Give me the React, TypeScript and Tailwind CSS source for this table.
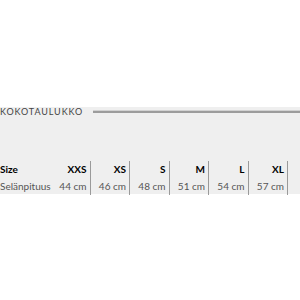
const sizes = [
  { label: 'XXS', back: '44 cm' },
  { label: 'XS', back: '46 cm' },
  { label: 'S', back: '48 cm' },
  { label: 'M', back: '51 cm' },
  { label: 'L', back: '54 cm' },
  { label: 'XL', back: '57 cm' },
];

export default function App() {
  return (
    <div className="w-[300px] h-[300px] bg-white pt-[107px] font-['Lato',sans-serif]">
      <section className="bg-[#efefef] h-[87px]">
        {/* heading with rule */}
        <div className="flex items-center h-[8px]">
          <h2 className="text-[9px] leading-none tracking-[0.9px] text-[#444] uppercase whitespace-nowrap">
            Kokotaulukko
          </h2>
          <div className="flex-1 ml-[10px] flex flex-col">
            <div className="h-px bg-[#d2d2d2]" />
            <div className="h-[2px] bg-[#9c9c9c]" />
          </div>
        </div>

        <div className="mt-[46px] grid grid-cols-[51px_repeat(6,39.5px)] text-[10px]">
          <div className="h-[17px] flex items-center font-bold text-black">Size</div>
          {sizes.map((s) => (
            <div
              key={s.label}
              className="h-[17px] flex items-center justify-end pr-[3px] border-r border-[#9a9a9a] font-bold text-black"
            >
              {s.label}
            </div>
          ))}
          <div className="h-[17px] flex items-center text-[#555]">Selänpituus</div>
          {sizes.map((s) => (
            <div
              key={s.label}
              className="h-[17px] flex items-center justify-end pr-[3px] border-r border-[#9a9a9a] text-[#555]"
            >
              {s.back}
            </div>
          ))}
        </div>
      </section>
    </div>
  );
}
